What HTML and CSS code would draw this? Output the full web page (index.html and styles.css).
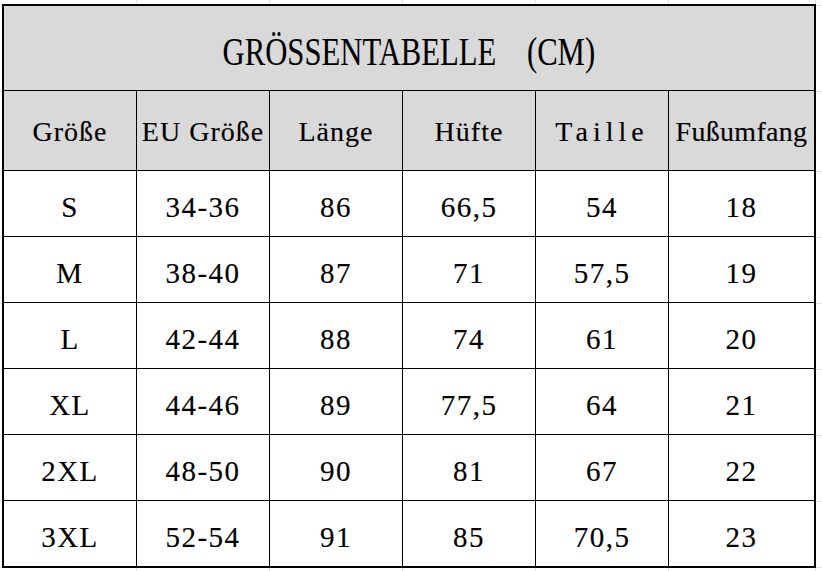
FILE: index.html
```html
<!DOCTYPE html>
<html lang="de">
<head>
<meta charset="utf-8">
<title>Größentabelle</title>
<link rel="stylesheet" href="styles.css">
</head>
<body>
<div class="sheet">
  <div class="cell title"><span class="title-text">GRÖSSENTABELLE<span class="unit">(CM)</span></span></div>

  <div class="cell head">Größe</div>
  <div class="cell head">EU Größe</div>
  <div class="cell head">Länge</div>
  <div class="cell head">Hüfte</div>
  <div class="cell head wide">Taille</div>
  <div class="cell head tight">Fußumfang</div>

  <div class="cell">S</div><div class="cell">34-36</div><div class="cell">86</div><div class="cell">66,5</div><div class="cell">54</div><div class="cell">18</div>
  <div class="cell">M</div><div class="cell">38-40</div><div class="cell">87</div><div class="cell">71</div><div class="cell">57,5</div><div class="cell">19</div>
  <div class="cell">L</div><div class="cell">42-44</div><div class="cell">88</div><div class="cell">74</div><div class="cell">61</div><div class="cell">20</div>
  <div class="cell">XL</div><div class="cell">44-46</div><div class="cell">89</div><div class="cell">77,5</div><div class="cell">64</div><div class="cell">21</div>
  <div class="cell">2XL</div><div class="cell">48-50</div><div class="cell">90</div><div class="cell">81</div><div class="cell">67</div><div class="cell">22</div>
  <div class="cell">3XL</div><div class="cell">52-54</div><div class="cell">91</div><div class="cell">85</div><div class="cell">70,5</div><div class="cell">23</div>
</div>
</body>
</html>
```
FILE: styles.css
```css
html, body {
  margin: 0;
  padding: 0;
}

body {
  width: 822px;
  height: 571px;
  overflow: hidden;
  background-color: #ffffff;
  background-image:
    linear-gradient(#e3e3e3, #e3e3e3),
    linear-gradient(#e3e3e3, #e3e3e3),
    linear-gradient(#e3e3e3, #e3e3e3),
    linear-gradient(#e3e3e3, #e3e3e3),
    linear-gradient(#e3e3e3, #e3e3e3),
    linear-gradient(#e3e3e3, #e3e3e3),
    linear-gradient(#e3e3e3, #e3e3e3),
    linear-gradient(#e3e3e3, #e3e3e3),
    linear-gradient(#e3e3e3, #e3e3e3),
    linear-gradient(#e3e3e3, #e3e3e3),
    linear-gradient(#e3e3e3, #e3e3e3),
    linear-gradient(#e3e3e3, #e3e3e3),
    linear-gradient(#e3e3e3, #e3e3e3),
    linear-gradient(#e3e3e3, #e3e3e3),
    linear-gradient(#e3e3e3, #e3e3e3);
  background-repeat: no-repeat;
  background-size:
    1px 100%, 1px 100%, 1px 100%, 1px 100%, 1px 100%, 1px 100%,
    100% 1px, 100% 1px, 100% 1px, 100% 1px, 100% 1px, 100% 1px, 100% 1px, 100% 1px, 100% 1px;
  background-position:
    136px 0, 269px 0, 402px 0, 535px 0, 668px 0, 815px 0,
    0 5px, 0 91px, 0 171px, 0 237px, 0 303px, 0 369px, 0 435px, 0 501px, 0 567px;
  font-family: "Liberation Serif", "Times New Roman", serif;
  color: #000;
}

.sheet {
  margin: 4px 0 0 2px;
  width: 814px;
  box-sizing: border-box;
  display: grid;
  grid-template-columns: 132px 132px 132px 132px 132px 145px;
  grid-template-rows: 84px 79px repeat(6, 65px);
  gap: 1px;
  background: #000;
  border: 2px solid #000;
}

.cell {
  background: #fff;
  display: flex;
  align-items: center;
  justify-content: center;
  font-size: 29px;
  letter-spacing: 1.5px;
  padding-top: 7px;
  box-sizing: border-box;
  white-space: nowrap;
  overflow: hidden;
  -webkit-text-stroke: 0.15px #000;
}

.head {
  background: #d9d9d9;
  padding-top: 3px;
  font-size: 28px;
  letter-spacing: 1px;
}

.head.wide {
  letter-spacing: 5px;
}

.head.tight {
  letter-spacing: 0.3px;
}

.title {
  grid-column: 1 / -1;
  background: #d9d9d9;
  padding-top: 6px;
  -webkit-text-stroke: 0.1px #000;
}

.title-text {
  display: inline-block;
  font-size: 40px;
  letter-spacing: 0;
  transform: scaleX(0.767);
}

.unit {
  margin-left: 40px;
}
```
